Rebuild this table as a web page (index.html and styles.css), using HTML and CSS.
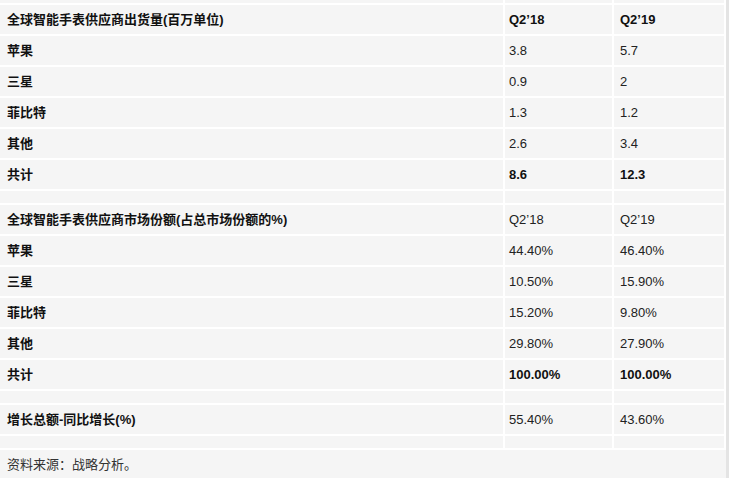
FILE: index.html
```html
<!DOCTYPE html>
<html lang="zh-CN">
<head>
<meta charset="utf-8">
<title>全球智能手表供应商</title>
<link rel="stylesheet" href="styles.css">
</head>
<body>
<table class="data">
  <tbody>
    <tr class="cut"><td></td><td></td><td></td></tr>
    <tr class="head"><td class="label">全球智能手表供应商出货量(百万单位)</td><td class="strong">Q2’18</td><td class="strong">Q2’19</td></tr>
    <tr><td class="label">苹果</td><td>3.8</td><td>5.7</td></tr>
    <tr><td class="label">三星</td><td>0.9</td><td>2</td></tr>
    <tr><td class="label">菲比特</td><td>1.3</td><td>1.2</td></tr>
    <tr><td class="label">其他</td><td>2.6</td><td>3.4</td></tr>
    <tr><td class="label">共计</td><td class="strong">8.6</td><td class="strong">12.3</td></tr>
    <tr class="gap"><td></td><td></td><td></td></tr>
    <tr class="head"><td class="label">全球智能手表供应商市场份额(占总市场份额的%)</td><td>Q2’18</td><td>Q2’19</td></tr>
    <tr><td class="label">苹果</td><td>44.40%</td><td>46.40%</td></tr>
    <tr><td class="label">三星</td><td>10.50%</td><td>15.90%</td></tr>
    <tr><td class="label">菲比特</td><td>15.20%</td><td>9.80%</td></tr>
    <tr><td class="label">其他</td><td>29.80%</td><td>27.90%</td></tr>
    <tr><td class="label">共计</td><td class="strong">100.00%</td><td class="strong">100.00%</td></tr>
    <tr class="gap"><td></td><td></td><td></td></tr>
    <tr><td class="label">增长总额-同比增长(%)</td><td>55.40%</td><td>43.60%</td></tr>
    <tr class="gap"><td></td><td></td><td></td></tr>
    <tr class="note"><td colspan="3">资料来源：战略分析。</td></tr>
  </tbody>
</table>
</body>
</html>
```

FILE: styles.css
```css
html, body {
  margin: 0;
  padding: 0;
  background: #ffffff;
}

body {
  font-family: "Liberation Sans", "Noto Sans CJK SC", Arial, sans-serif;
  font-size: 13px;
  color: #222222;
  overflow: hidden;
}

.data {
  border-collapse: separate;
  border-spacing: 0;
  width: 729px;
  table-layout: fixed;
  border-right: 3px solid #e4e4e4;
}

.data td {
  background: #f5f5f5;
  border-bottom: 2px solid #ffffff;
  border-right: 2px solid #ffffff;
  height: 29px;
  padding: 0 5px;
  vertical-align: middle;
  line-height: 16px;
  white-space: nowrap;
}

.data td:nth-child(1) {
  width: 493px;
  padding-left: 7px;
  padding-right: 3px;
}

.data td:nth-child(2) {
  width: 98px;
  padding-left: 4px;
}

.data td:nth-child(3) {
  padding-left: 6px;
}

.data .label {
  font-weight: bold;
  color: #111111;
}

.data .strong {
  font-weight: bold;
  color: #111111;
}

.data .cut td {
  height: 3px;
  padding-top: 0;
  padding-bottom: 0;
  line-height: 0;
}

.data .gap td {
  height: 12px;
  line-height: 0;
}

.data .note td {
  color: #333333;
  border-right: none;
  border-bottom: none;
}
```
